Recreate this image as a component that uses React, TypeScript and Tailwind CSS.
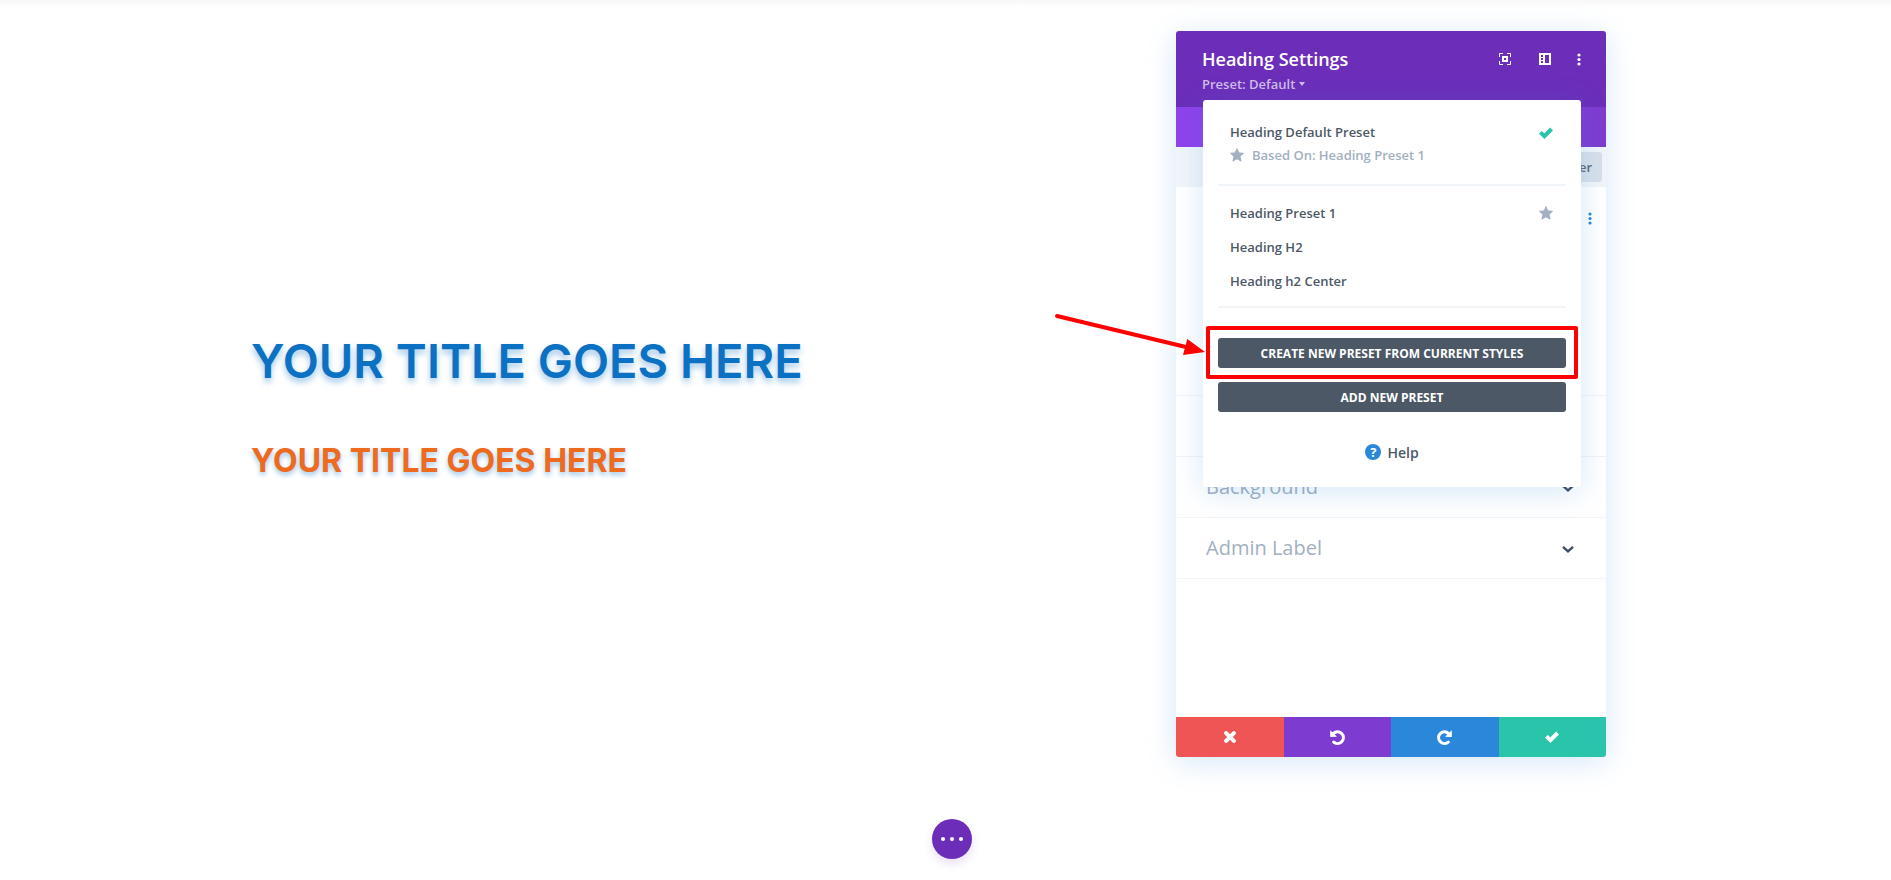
import type { ReactNode } from 'react';

interface IconProps {
  className?: string;
}

function StarIcon({ className }: IconProps) {
  return (
    <svg viewBox="0 0 14 14" className={className} fill="currentColor" aria-hidden="true">
      <path
        d="M7 0.7 L8.8 4.9 L13.5 5.3 L10 8.4 L11.1 13.1 L7 10.8 L2.9 13.1 L4 8.4 L0.5 5.3 L5.2 4.9 Z"
        stroke="currentColor"
        strokeWidth="1"
        strokeLinejoin="round"
      />
    </svg>
  );
}

function CheckIcon({ className }: IconProps) {
  return (
    <svg viewBox="0 0 14 12" className={className} fill="none" stroke="currentColor" strokeWidth="4" aria-hidden="true">
      <path d="M1.4 5.4 L5.4 9.2 L12.6 2" />
    </svg>
  );
}

function CloseIcon({ className }: IconProps) {
  return (
    <svg viewBox="0 0 12 12" className={className} fill="none" stroke="currentColor" strokeWidth="4" strokeLinecap="round" aria-hidden="true">
      <path d="M2.1 2.1 L9.9 9.9 M9.9 2.1 L2.1 9.9" />
    </svg>
  );
}

function UndoIcon({ className }: IconProps) {
  return (
    <svg viewBox="0 0 15 15" className={className} aria-hidden="true">
      <path
        d="M3.8 12.1 A5.8 5.8 0 1 0 3.4 3.6"
        fill="none"
        stroke="currentColor"
        strokeWidth="3.1"
        strokeLinecap="round"
      />
      <path d="M0.2 0.2 L7 6.8 L0.8 7 Q0.2 7 0.2 6.4 Z" fill="currentColor" />
    </svg>
  );
}

function ChevronIcon({ className }: IconProps) {
  return (
    <svg viewBox="0 0 12 8" className={className} fill="none" stroke="currentColor" strokeWidth="2.4" aria-hidden="true">
      <path d="M1 1.8 L6 6.3 L11 1.8" />
    </svg>
  );
}

function DotsIcon({ className }: IconProps) {
  return (
    <svg viewBox="0 0 4 13" className={className} fill="currentColor" aria-hidden="true">
      <circle cx="2" cy="2" r="1.6" />
      <circle cx="2" cy="6.5" r="1.6" />
      <circle cx="2" cy="11" r="1.6" />
    </svg>
  );
}

function FocusIcon({ className }: IconProps) {
  return (
    <svg viewBox="0 0 12 12" className={className} fill="none" stroke="currentColor" aria-hidden="true">
      <path d="M0.5 4 V0.5 H4 M8 0.5 H11.5 V4 M11.5 8 V11.5 H8 M4 11.5 H0.5 V8" />
      <rect x="4" y="4" width="4" height="4" strokeWidth="2" />
    </svg>
  );
}

function SidebarIcon({ className }: IconProps) {
  return (
    <svg viewBox="0 0 12 12" className={className} aria-hidden="true">
      <path
        fill="currentColor"
        fillRule="evenodd"
        d="M0 0 H12 V12 H0 Z M6 2 V10 H10 V2 Z M2 2 V4 H4 V2 Z M2 5 V7 H4 V5 Z M2 8 V10 H4 V8 Z"
      />
    </svg>
  );
}

const PRESETS = [
  { name: 'Heading Preset 1', starred: true },
  { name: 'Heading H2', starred: false },
  { name: 'Heading h2 Center', starred: false },
];

function PresetMenu() {
  return (
    <div className="absolute left-[27px] top-[69px] z-10 w-[378px] rounded-[3px] bg-white px-[15px] pt-[21px] pb-6 font-semibold text-[#4c5866] shadow-[0_5px_30px_rgba(43,135,218,0.2)]">
      <div className="px-3 text-[13px] leading-[22px]">
        <button type="button" className="flex w-full items-center justify-between">
          Heading Default Preset
          <CheckIcon className="mt-0.5 mr-px h-3 w-3.5 text-[#29c4a9]" />
        </button>
        <p className="mt-px flex items-center gap-2 text-[#a2b0c1]">
          <StarIcon className="size-3.5" />
          Based On: Heading Preset 1
        </p>
      </div>

      <hr className="mt-[18px] mb-[11px] border-t-2 border-[#f1f5f9]" />

      <ul className="text-[13px]">
        {PRESETS.map((preset) => (
          <li key={preset.name}>
            <button type="button" className="flex h-[34px] w-full items-center justify-between px-3">
              {preset.name}
              {preset.starred && <StarIcon className="mr-px mb-0.5 size-3.5 text-[#a2b0c1]" />}
            </button>
          </li>
        ))}
      </ul>

      <hr className="mt-[7px] mb-[30px] border-t-2 border-[#f1f5f9]" />

      {/* Primary action with its callout */}
      <div className="relative">
        <button type="button" className="block h-[30px] w-full rounded-[3px] bg-[#4c5866] pt-0.5 text-[12px] font-bold text-white">
          CREATE NEW PRESET FROM CURRENT STYLES
        </button>
        <div className="pointer-events-none absolute -inset-x-3 -top-3 -bottom-[11px] rounded-[2px] border-4 border-[#ff0000]" />
        <svg
          viewBox="0 0 152 44"
          className="pointer-events-none absolute -left-[164px] -top-[25px] h-[44px] w-[152px]"
          aria-hidden="true"
        >
          <path d="M3 3 L132 34" stroke="#ff0000" strokeWidth="4" strokeLinecap="round" />
          <path d="M133.3 26 L151 39 L129 42 Z" fill="#ff0000" />
        </svg>
      </div>

      <button type="button" className="mt-3.5 block h-[30px] w-full rounded-[3px] bg-[#4c5866] pt-0.5 text-[12px] font-bold text-white">
        ADD NEW PRESET
      </button>

      <a href="#help" className="mt-[31px] flex h-5 items-center justify-center gap-1.5 text-[14px] leading-5">
        <span className="mb-0.5 flex size-4 items-center justify-center rounded-full bg-[#2b87da] text-[13px] leading-4 font-bold text-white">
          ?
        </span>
        Help
      </a>
    </div>
  );
}

function OptionGroup({ title }: { title: string }) {
  return (
    <button
      type="button"
      className="flex h-[61px] w-full items-center justify-between border-b border-[#f1f3f6] px-[30px] text-left text-[20px] text-[#a2b0c1]"
    >
      {title}
      <ChevronIcon className="mt-0.5 mr-0.5 h-2 w-3 text-[#3e5062]" />
    </button>
  );
}

function FooterButton({ label, color, children }: { label: string; color: string; children: ReactNode }) {
  return (
    <button type="button" aria-label={label} className={`flex flex-1 items-center justify-center ${color}`}>
      {children}
    </button>
  );
}

function SettingsModal() {
  return (
    <section className="relative flex h-[726px] w-[430px] shrink-0 flex-col rounded-[3px] bg-white shadow-[0_5px_30px_rgba(43,135,218,0.2)]">
      {/* Header */}
      <header className="flex h-[76px] items-start justify-between rounded-t-[3px] bg-[#6c2eb9] pt-4 pr-[25px] pl-[26px] text-white">
        <div>
          <h2 className="text-[18px] leading-6 font-semibold">Heading Settings</h2>
          <button type="button" className="mt-0.5 flex items-center gap-1 text-[13px] leading-[22px] font-semibold text-[#d0bce8]">
            Preset: Default
            <svg viewBox="0 0 6 4" className="h-1 w-1.5" fill="currentColor" aria-hidden="true">
              <path d="M0 0 H6 L3 4 Z" />
            </svg>
          </button>
        </div>
        <div className="flex h-6 items-center">
          <button type="button" aria-label="Expand modal" className="mr-7">
            <FocusIcon className="size-3" />
          </button>
          <button type="button" aria-label="Snap to side" className="mr-[26px]">
            <SidebarIcon className="size-3" />
          </button>
          <button type="button" aria-label="More settings">
            <DotsIcon className="h-[13px] w-1" />
          </button>
        </div>
      </header>

      <div className="h-10 shrink-0 bg-linear-to-r from-[#8f42ec] to-[#7e3bd0]" />

      <div className="flex h-10 shrink-0 items-center justify-end bg-[#f1f5f9] pr-1">
        <button type="button" className="h-[30px] rounded-[3px] bg-[#d8e0ea] px-2.5 pt-0.5 text-[13px] font-semibold text-[#5c6b7c]">
          + Filter
        </button>
      </div>

      {/* Option groups */}
      <div className="flex-1">
        <div className="flex h-[209px] justify-end border-b border-[#f1f3f6] pt-[25px] pr-3.5">
          <button type="button" aria-label="Group options" className="self-start">
            <DotsIcon className="h-[13px] w-1 text-[#2b87da]" />
          </button>
        </div>
        <div className="h-[61px] border-b border-[#f1f3f6]" />
        <OptionGroup title="Background" />
        <OptionGroup title="Admin Label" />
      </div>

      <footer className="flex h-10 shrink-0 overflow-hidden rounded-b-[3px] text-white">
        <FooterButton label="Discard changes" color="bg-[#ef5555]">
          <CloseIcon className="size-3" />
        </FooterButton>
        <FooterButton label="Undo" color="bg-[#7e3bd0]">
          <UndoIcon className="size-[15px]" />
        </FooterButton>
        <FooterButton label="Redo" color="bg-[#2b87da]">
          <UndoIcon className="size-[15px] -scale-x-100" />
        </FooterButton>
        <FooterButton label="Save changes" color="bg-[#29c4a9]">
          <CheckIcon className="h-3 w-3.5" />
        </FooterButton>
      </footer>

      <PresetMenu />
    </section>
  );
}

export default function App() {
  return (
    <div className="min-h-screen bg-linear-to-b from-[#f8f8f8] to-white to-[8px] pt-[31px] pb-[21px] font-['Open_Sans',sans-serif]">
      <main className="flex items-start justify-between gap-10 pr-[285px] pl-[251px]">
        <div className="pt-[300px] font-['Inter',sans-serif] whitespace-nowrap">
          <h1 className="text-[47px] leading-[60px] font-semibold text-[#0c71c3] [text-shadow:0_4px_6px_rgba(12,113,195,0.4)]">
            YOUR TITLE GOES HERE
          </h1>
          <h2 className="mt-[50px] text-[32px] leading-10 font-bold text-[#ed6a1f] [text-shadow:0_3px_5px_rgba(12,113,195,0.4)]">
            YOUR TITLE GOES HERE
          </h2>
        </div>
        <SettingsModal />
      </main>

      <div className="mt-[62px] flex justify-center pl-3">
        <button
          type="button"
          aria-label="Open page settings"
          className="flex size-10 items-center justify-center gap-[5px] rounded-full bg-[#6c2eb9] shadow-[0_5px_10px_rgba(108,46,185,0.15)]"
        >
          <span className="size-1 rounded-full bg-white" />
          <span className="size-1 rounded-full bg-white" />
          <span className="size-1 rounded-full bg-white" />
        </button>
      </div>
    </div>
  );
}
